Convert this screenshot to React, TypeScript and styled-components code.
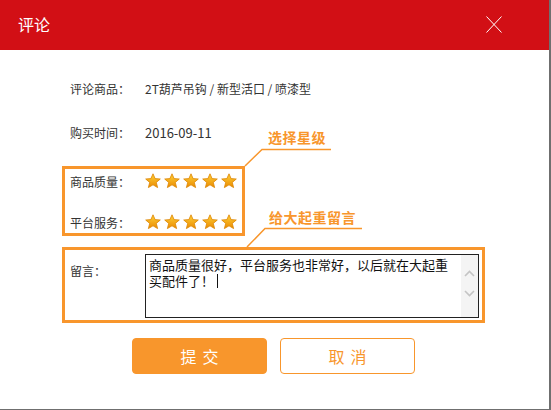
import styled, { createGlobalStyle } from "styled-components";

const ORANGE = "#f8962c";

const GlobalStyle = createGlobalStyle`
  html, body {
    margin: 0;
    padding: 0;
    background: #fff;
  }
  body {
    font-family: "Microsoft YaHei", "Noto Sans CJK SC", "Liberation Sans", sans-serif;
    color: #333;
  }
`;

const Dialog = styled.div`
  position: relative;
  width: 551px;
  height: 410px;
  box-sizing: border-box;
  border-right: 2px solid #6f6f6f;
  border-bottom: 1px solid #6f6f6f;
  background: #fff;
  display: flex;
  flex-direction: column;
`;

const Header = styled.div`
  height: 50px;
  flex: none;
  background: #d20f15;
  display: flex;
  align-items: center;
  justify-content: space-between;
  padding: 0 47px 0 18px;
`;

const Title = styled.div`
  color: #fff;
  font-size: 16px;
  line-height: 20px;
  padding-bottom: 2px;
`;

const Close = styled.svg`
  width: 16px;
  height: 17px;
  display: block;
  margin-bottom: 2px;
`;

const Body = styled.div`
  padding-top: 16px;
  display: flex;
  flex-direction: column;
`;

const Form = styled.div`
  padding-left: 62px;
  display: flex;
  flex-direction: column;
`;

const InfoRow = styled.div`
  display: flex;
  align-items: center;
  height: 44px;
  padding-left: 8px;
`;

const Label = styled.div`
  width: 75px;
  flex: none;
  font-size: 12px;
  color: #333;
`;

const Value = styled.div<{ $num?: boolean }>`
  font-size: ${(p) => (p.$num ? "13px" : "12px")};
  color: #333;
`;

const RateBox = styled.div`
  margin-top: 12px;
  width: 183px;
  height: 70px;
  box-sizing: border-box;
  border: 3px solid ${ORANGE};
  padding: 1px 0 0 5px;
  display: flex;
  flex-direction: column;
  justify-content: space-between;
`;

const RateRow = styled.div`
  display: flex;
  align-items: center;
  height: 22px;
`;

const Stars = styled.div`
  display: flex;
  gap: 3px;
`;

const CommentBox = styled.div`
  margin-top: 11px;
  width: 423px;
  height: 76px;
  box-sizing: border-box;
  border: 3px solid ${ORANGE};
  padding: 4px 3px 2px 5px;
  display: flex;
`;

const CommentLabel = styled(Label)`
  padding-top: 8px;
`;

const TextBox = styled.div`
  flex: 1;
  border: 1px solid #222;
  display: flex;
  box-sizing: border-box;
`;

const TextContent = styled.div`
  flex: 1;
  padding: 2px 3px 0 3px;
  font-size: 13px;
  line-height: 16px;
  color: #111;
`;

const Caret = styled.span`
  display: inline-block;
  width: 1px;
  height: 14px;
  background: #111;
  margin-left: 3px;
  vertical-align: -2px;
`;

const ScrollBar = styled.div`
  width: 17px;
  flex: none;
  background: #f4f4f4;
  display: flex;
  flex-direction: column;
  align-items: center;
  padding-top: 15px;
  gap: 13px;
`;

const Actions = styled.div`
  display: flex;
  justify-content: center;
  gap: 13px;
  margin-top: 15px;
  padding-right: 2px;
`;

const Button = styled.button<{ $primary?: boolean }>`
  width: 135px;
  height: 36px;
  box-sizing: border-box;
  border-radius: 4px;
  border: 1px solid ${ORANGE};
  background: ${(p) => (p.$primary ? ORANGE : "#fff")};
  color: ${(p) => (p.$primary ? "#fff" : ORANGE)};
  font-family: "Microsoft YaHei", "Noto Sans CJK SC", sans-serif;
  font-size: 16px;
  letter-spacing: 6px;
  text-indent: 6px;
  padding: 0;
`;

const Note = styled.div<{ $x: number; $y: number }>`
  position: absolute;
  left: ${(p) => p.$x}px;
  top: ${(p) => p.$y}px;
  color: ${ORANGE};
  font-size: 14px;
  font-weight: bold;
  line-height: 16px;
  letter-spacing: 0.5px;
`;

const NoteLines = styled.svg`
  position: absolute;
  left: 0;
  top: 0;
  width: 551px;
  height: 410px;
  pointer-events: none;
`;

const Star = () => (
  <svg width="16" height="16" viewBox="0 0 16 16">
    <defs>
      <linearGradient id="sg" x1="0" y1="0" x2="0" y2="1">
        <stop offset="0" stopColor="#ffd23a" />
        <stop offset="1" stopColor="#ea8a00" />
      </linearGradient>
    </defs>
    <path
      d="M8 0.8 L10.1 5.6 L15.3 6 L11.3 9.4 L12.6 14.6 L8 11.8 L3.4 14.6 L4.7 9.4 L0.7 6 L5.9 5.6 Z"
      fill="url(#sg)"
      stroke="#dc8400"
      strokeWidth="0.8"
      strokeLinejoin="round"
    />
  </svg>
);

const StarRow = () => (
  <Stars>
    {[0, 1, 2, 3, 4].map((i) => (
      <Star key={i} />
    ))}
  </Stars>
);

const Chevron = ({ up }: { up?: boolean }) => (
  <svg width="11" height="7" viewBox="0 0 11 7">
    <path
      d={up ? "M1 6 L5.5 1.5 L10 6" : "M1 1 L5.5 5.5 L10 1"}
      fill="none"
      stroke="#c4c4c4"
      strokeWidth="1.6"
    />
  </svg>
);

const App = () => {
  return (
    <Dialog>
      <GlobalStyle />
      <Header>
        <Title>评论</Title>
        <Close viewBox="0 0 16 17">
          <path d="M0.5 0.5 L15.5 16.5 M15.5 0.5 L0.5 16.5" stroke="#fff" strokeWidth="1" />
        </Close>
      </Header>
      <Body>
        <Form>
          <InfoRow>
            <Label>评论商品：</Label>
            <Value>2T葫芦吊钩 / 新型活口 / 喷漆型</Value>
          </InfoRow>
          <InfoRow>
            <Label>购买时间：</Label>
            <Value $num>2016-09-11</Value>
          </InfoRow>
          <RateBox>
            <RateRow>
              <Label>商品质量：</Label>
              <StarRow />
            </RateRow>
            <RateRow>
              <Label>平台服务：</Label>
              <StarRow />
            </RateRow>
          </RateBox>
          <CommentBox>
            <CommentLabel>留言：</CommentLabel>
            <TextBox>
              <TextContent>
                商品质量很好，平台服务也非常好，以后就在大起重买配件了！
                <Caret />
              </TextContent>
              <ScrollBar>
                <Chevron up />
                <Chevron />
              </ScrollBar>
            </TextBox>
          </CommentBox>
        </Form>
        <Actions>
          <Button $primary>提交</Button>
          <Button>取消</Button>
        </Actions>
      </Body>

      <Note $x={268} $y={129}>选择星级</Note>
      <Note $x={269} $y={209}>给大起重留言</Note>
      <NoteLines>
        <path d="M331 149.5 L262 149.5 L245 166" fill="none" stroke={ORANGE} strokeWidth="1.5" />
        <path d="M362 228.5 L265 228.5 L247 247" fill="none" stroke={ORANGE} strokeWidth="1.5" />
      </NoteLines>
    </Dialog>
  );
};

export default App;
